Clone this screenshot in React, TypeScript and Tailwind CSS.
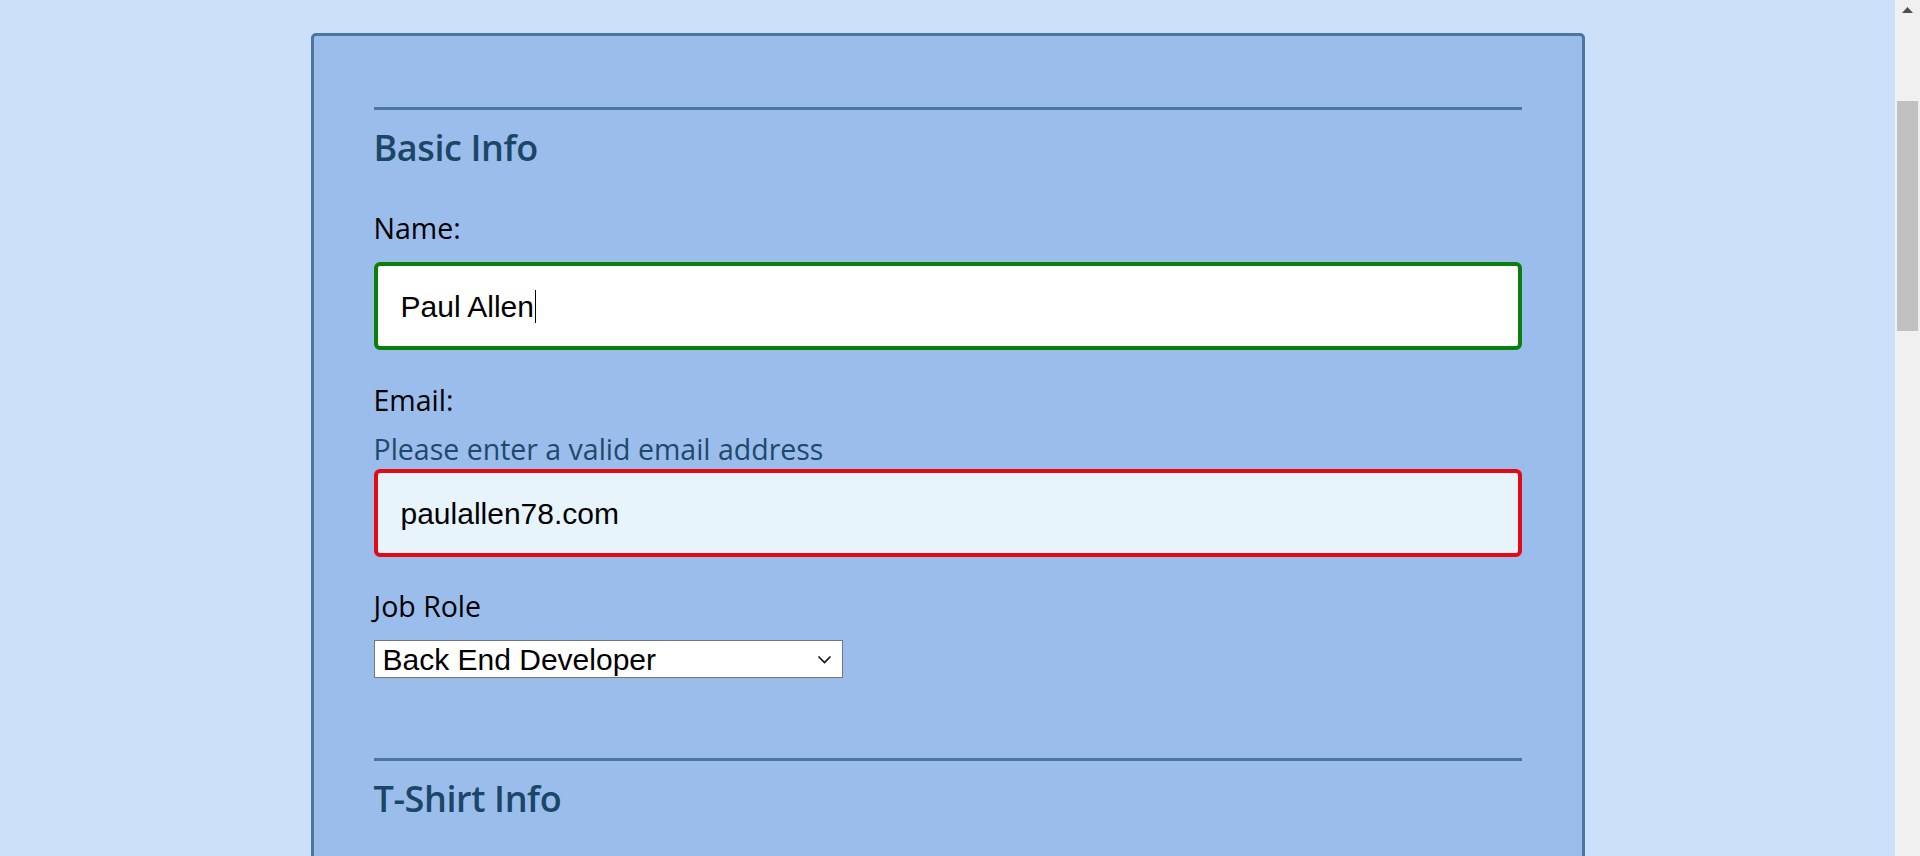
import React from "react";

const labelFont = { fontFamily: "'Open Sans', 'Noto Sans', sans-serif" };

export default function App() {
  return (
    <div className="flex h-[856px] w-[1920px] overflow-hidden bg-[#cce0f9]">
      <div className="flex flex-1 justify-center pt-[33px]">
        <div
          className="h-[900px] w-[1274px] rounded-[5px] border-[3px] border-[#4a76a0] bg-[#9bbdec] px-[60px] pt-[71px]"
          style={labelFont}
        >
          <div className="h-[3px] bg-[#4a76a0]" />
          <h2 className="mt-[18px] text-[36px] font-[550] leading-[40px] tracking-[-0.4px] text-[#1b4767]" style={labelFont}>
            Basic Info
          </h2>
          <div className="mt-[44px] text-[28.5px] leading-[32px] text-black">Name:</div>
          <div className="mt-[18px] flex h-[88px] items-center rounded-[6px] border-4 border-[#0b7f0b] bg-white pl-[23px] font-['Liberation_Sans',Arial,sans-serif] text-[30px] text-black">
            <span>Paul Allen</span>
            <span className="ml-px h-[33px] w-px bg-black" />
          </div>
          <div className="mt-[34px] text-[28.5px] leading-[32px] text-black">Email:</div>
          <div className="mt-[17px] text-[28.5px] leading-[32px] text-[#1d4a6b]">
            Please enter a valid email address
          </div>
          <div className="mt-[4px] flex h-[88px] items-center rounded-[6px] border-4 border-[#e50914] bg-[#e8f4fb] pl-[23px] font-['Liberation_Sans',Arial,sans-serif] text-[30px] text-black">
            paulallen78.com
          </div>
          <div className="mt-[33px] text-[28.5px] leading-[32px] text-black">Job Role</div>
          <div className="mt-[18px] flex h-[38px] w-[469px] items-center justify-between border border-[#767676] bg-white pl-[8px] pr-[10px] font-['Liberation_Sans',Arial,sans-serif] text-[30px] text-black">
            <span>Back End Developer</span>
            <svg width="15" height="9" viewBox="0 0 15 9" fill="none">
              <path d="M1.5 1.5 L7.5 7.5 L13.5 1.5" stroke="#111" strokeWidth="1.6" />
            </svg>
          </div>
          <div className="mt-[80px] h-[3px] bg-[#4a76a0]" />
          <h2 className="mt-[18px] text-[36px] font-[550] leading-[40px] tracking-[-0.4px] text-[#1b4767]" style={labelFont}>
            T-Shirt Info
          </h2>
        </div>
      </div>
      <div className="flex w-[25px] flex-col bg-[#f0f0f0]">
        <div className="flex h-[20px] items-center justify-center">
          <svg width="11" height="6" viewBox="0 0 11 6">
            <path d="M0 6 L5.5 0 L11 6 Z" fill="#505050" />
          </svg>
        </div>
        <div className="ml-[2px] mt-[81px] h-[230px] w-[21px] bg-[#c1c1c1]" />
      </div>
    </div>
  );
}
